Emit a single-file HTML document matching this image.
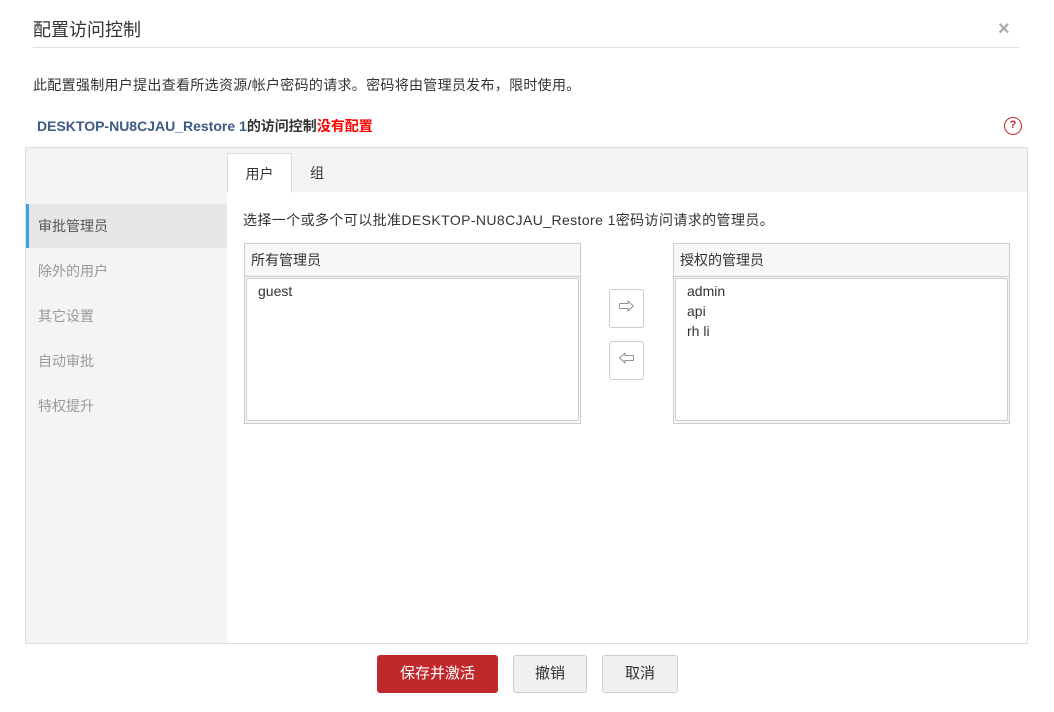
<!DOCTYPE html>
<html><head><meta charset="utf-8"><style>
*{box-sizing:border-box;margin:0;padding:0}
body{width:1054px;height:712px;background:#fff;font-family:"Liberation Sans","Noto Sans CJK SC",sans-serif;color:#333;position:relative;overflow:hidden}
.a{position:absolute}
.title{left:33px;top:16px;font-size:18px;color:#333}
.hr{left:33px;top:47px;width:986px;height:1px;background:#e0e0e0}
.close{left:998px;top:18px;font-size:20px;color:#aaa;font-weight:bold}
.desc{left:33px;top:75px;font-size:14px;letter-spacing:0.3px}
.head{left:37px;top:116px;font-size:14px;font-weight:bold;color:#333}
.help{left:1004px;top:117px;width:18px;height:18px;border:1.5px solid #c0292b;border-radius:50%;font-size:11px;color:#c0292b;text-align:center;line-height:15px;font-weight:bold}
.box{left:25px;top:147px;width:1003px;height:497px;border:1px solid #ddd;background:#f4f4f4}
.panel{left:227px;top:192px;width:800px;height:451px;background:#fff}
.tab{left:227px;top:153px;width:65px;height:40px;background:#fff;border:1px solid #ddd;border-bottom:none;font-size:14px;text-align:center;line-height:40px}
.tab2{left:310px;top:153px;font-size:14px;line-height:40px}
.side{left:26px;width:201px;height:44px;font-size:14px;color:#999;padding-left:12px;line-height:44px}
.side.on{background:#e6e6e6;color:#555;border-left:3px solid #3ba1e0;padding-left:9px}
.inst{left:243px;top:210px;font-size:14px;letter-spacing:0.4px}
.lb{top:243px;width:337px;height:181px;border:1px solid #ccc;background:#f7f7f7}
.lb .h{height:33px;line-height:32px;padding-left:6px;font-size:14px;border-bottom:1px solid #ccc}
.lb .l{position:absolute;left:1px;top:34px;right:1px;bottom:2px;background:#fff;border:1px solid #ccc;border-radius:2px;padding:2px 11px;font-size:14px;line-height:20px;color:#333}
.mv{left:609px;width:35px;height:39px;border:1px solid #ccc;border-radius:3px;background:#fff;text-align:center;line-height:36px;font-size:16px;color:#555}
.btn{top:655px;height:38px;border:1px solid #ccc;border-radius:3px;background:#f0f0f0;font-size:15px;text-align:center;line-height:36px}
</style></head><body>
<div class="a title">配置访问控制</div>
<div class="a close">×</div>
<div class="a hr"></div>
<div class="a desc">此配置强制用户提出查看所选资源/帐户密码的请求。密码将由管理员发布，限时使用。</div>
<div class="a head"><span style="color:#3d5a85">DESKTOP-NU8CJAU_Restore 1</span>的访问控制<span style="color:#f00">没有配置</span></div>
<div class="a help">?</div>
<div class="a box"></div>
<div class="a panel"></div>
<div class="a tab">用户</div>
<div class="a tab2">组</div>
<div class="a side on" style="top:204px">审批管理员</div>
<div class="a side" style="top:249px">除外的用户</div>
<div class="a side" style="top:294px">其它设置</div>
<div class="a side" style="top:339px">自动审批</div>
<div class="a side" style="top:384px">特权提升</div>
<div class="a inst">选择一个或多个可以批准DESKTOP-NU8CJAU_Restore 1密码访问请求的管理员。</div>
<div class="a lb" style="left:244px"><div class="h">所有管理员</div><div class="l">guest</div></div>
<div class="a mv" style="top:289px">⇨</div>
<div class="a mv" style="top:341px">⇦</div>
<div class="a lb" style="left:673px"><div class="h">授权的管理员</div><div class="l">admin<br>api<br>rh li</div></div>
<div class="a btn" style="left:377px;width:121px;background:#c0292b;border-color:#c0292b;color:#fff">保存并激活</div>
<div class="a btn" style="left:513px;width:74px">撤销</div>
<div class="a btn" style="left:602px;width:76px">取消</div>
</body></html>
